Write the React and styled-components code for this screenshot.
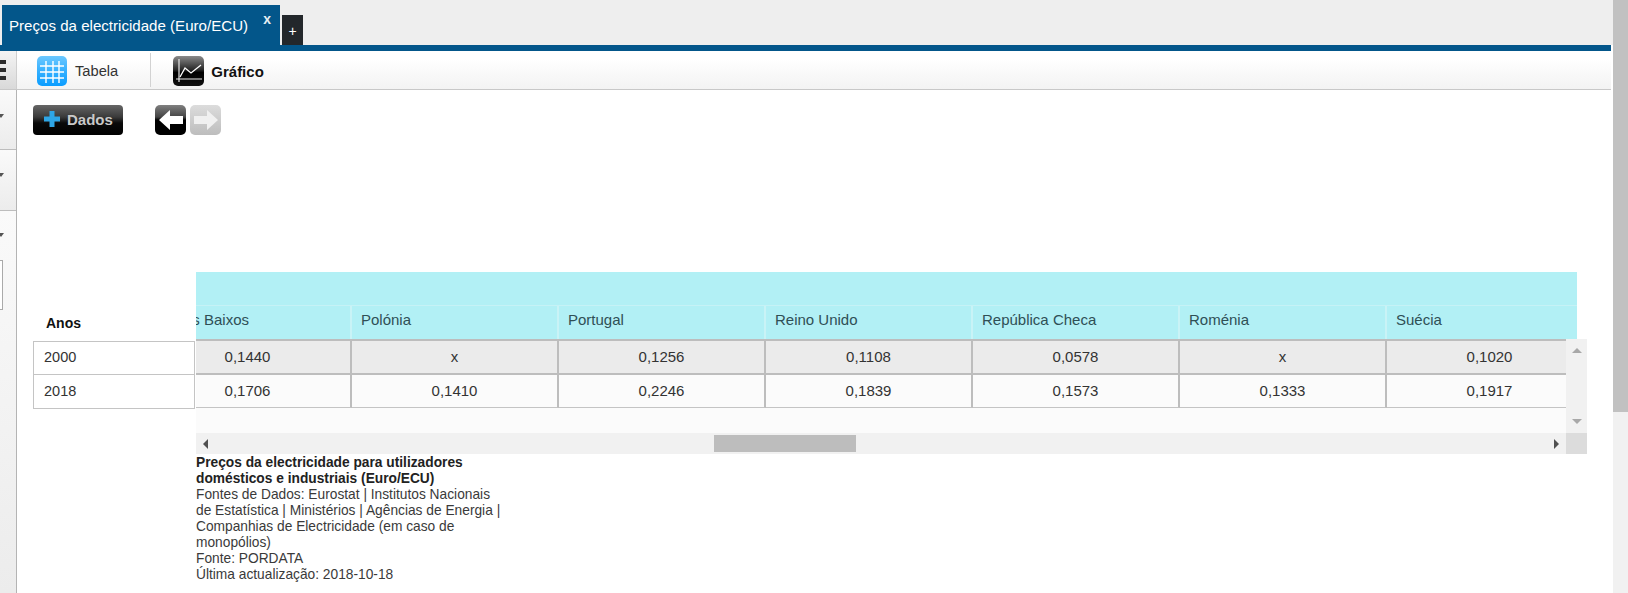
import styled, { createGlobalStyle } from "styled-components"

const Global = createGlobalStyle`
  html, body { margin: 0; padding: 0; height: 593px; overflow: hidden; background: #fff; }
  body { font-family: "Liberation Sans", Arial, sans-serif; font-size: 14px; color: #333; }
`

const Page = styled.div`
  display: flex;
  width: 1628px;
  height: 593px;
  overflow: hidden;
`
const Shell = styled.div`
  flex: 1;
  min-width: 0;
  display: flex;
  flex-direction: column;
`
const PageScroll = styled.div`
  width: 15px;
  background: #f1f1f1;
`
const PageThumb = styled.div`
  height: 412px;
  background: #c1c1c1;
`
const TabStrip = styled.div`
  height: 45px;
  box-sizing: border-box;
  padding: 5px 0 0 2px;
  background: #eeeeee;
  display: flex;
  align-items: flex-end;
  gap: 2px;
`
const Tab = styled.div`
  width: 278px;
  height: 40px;
  box-sizing: border-box;
  padding: 0 9px 0 7px;
  background: #03568a;
  color: #fff;
  font-size: 15.1px;
  line-height: 42px;
  display: flex;
  justify-content: space-between;
`
const TabClose = styled.span`
  font-weight: bold;
  font-size: 14px;
  line-height: 29px;
  height: 29px;
  color: #e6eef4;
`
const AddTab = styled.div`
  width: 21px;
  height: 30px;
  background: #23272b;
  color: #fff;
  font-size: 14px;
  line-height: 32px;
  text-align: center;
`
const BlueBar = styled.div`
  height: 6px;
  margin-right: 2px;
  background: #03568a;
`
const Toolbar = styled.div`
  height: 39px;
  box-sizing: border-box;
  margin-right: 2px;
  border-bottom: 1px solid #c8c8c8;
  background: linear-gradient(180deg, #ffffff 20%, #f3f3f3 100%);
  display: flex;
  align-items: center;
`
const MenuCell = styled.div`
  width: 17px;
  height: 100%;
  box-sizing: border-box;
  border-right: 1px solid #cfcfcf;
  background: linear-gradient(180deg, #f4f4f4, #d9d9d9);
  display: flex;
  flex-direction: column;
  justify-content: center;
  gap: 4px;
  overflow: hidden;
`
const MenuLine = styled.span`
  width: 6px;
  height: 4px;
  background: #2b2b2b;
`
const ToolItem = styled.div`
  height: 30px;
  margin-top: 2px;
  display: flex;
  align-items: center;
  gap: ${p => p.$gap};
  margin-left: ${p => p.$left};
  font-size: ${p => (p.$active ? "15px" : "14.7px")};
  font-weight: ${p => (p.$active ? "bold" : "normal")};
  color: ${p => (p.$active ? "#111" : "#333")};
`
const ToolDivider = styled.div`
  width: 1px;
  height: 34px;
  margin-left: 32px;
  background: #d2d2d2;
`
const Body = styled.div`
  flex: 1;
  min-height: 0;
  display: flex;
`
const Sidebar = styled.div`
  width: 17px;
  box-sizing: border-box;
  border-right: 1px solid #b4b4b4;
  background: #f0f0f0;
  display: flex;
  flex-direction: column;
`
const SideSection = styled.div`
  height: ${p => p.$height};
  box-sizing: border-box;
  padding-top: ${p => p.$pad};
  border-bottom: ${p => (p.$last ? "none" : "1px solid #bdbdbd")};
  background: linear-gradient(180deg, #fafafa, #ececec);
`
const Caret = styled.div`
  width: 0;
  height: 0;
  border-left: 3px solid transparent;
  border-right: 3px solid transparent;
  border-top: 4px solid #555;
  margin-left: -2px;
`
const SideInput = styled.div`
  width: 2px;
  height: 48px;
  margin-top: 23px;
  background: #fff;
  border: 1px solid #aaa;
  border-left: none;
`
const Content = styled.div`
  flex: 1;
  min-width: 0;
  padding: 15px 0 0 16px;
`
const Actions = styled.div`
  height: 30px;
  display: flex;
  align-items: center;
`
const DataButton = styled.div`
  width: 90px;
  height: 30px;
  box-sizing: border-box;
  padding: 0 0 2px 11px;
  border-radius: 4px;
  background: linear-gradient(180deg, #666 0%, #3a3a3a 40%, #0a0a0a 60%, #000 100%);
  color: #c9c9c9;
  font-weight: bold;
  font-size: 15px;
  display: flex;
  align-items: center;
  gap: 7px;
  margin-right: 32px;
`
const ArrowButton = styled.div`
  width: 31px;
  height: 30px;
  margin-right: 4px;
  border-radius: 5px;
  background: ${p => (p.$off
    ? "linear-gradient(180deg, #dcdcdc 0%, #bdbdbd 100%)"
    : "linear-gradient(180deg, #808080 0%, #444 40%, #000 50%, #000 100%)")};
  display: flex;
  align-items: center;
  justify-content: center;
`
const TableWrap = styled.div`
  display: flex;
  margin-top: 137px;
`
const Frozen = styled.div`
  width: 163px;
  flex: none;
`
const FrozenHead = styled.div`
  height: 69px;
  box-sizing: border-box;
  padding: 0 0 10px 13px;
  display: flex;
  align-items: flex-end;
  font-weight: bold;
  color: #111;
`
const FrozenCell = styled.div`
  height: 34px;
  box-sizing: border-box;
  width: 162px;
  padding-left: 10px;
  border: 1px solid #c4c4c4;
  border-top-width: ${p => (p.$first ? "1px" : "0")};
  font-size: 14.5px;
  line-height: ${p => (p.$first ? "30px" : "32px")};
  background: #fff;
`
const Pane = styled.div`
  width: 1391px;
  flex: none;
`
const HeadBlock = styled.div`
  width: 1381px;
  background: #b2f0f5;
  overflow: hidden;
`
const HeadBand = styled.div`
  height: 33px;
  border-bottom: 1px solid #c6f2f6;
`
const Track = styled.div`
  display: flex;
  margin-left: -51px;
  width: max-content;
`
const HeadCell = styled.div`
  width: 207px;
  height: 33px;
  box-sizing: border-box;
  padding-left: 9px;
  border-right: 2px solid #c9f3f6;
  font-size: 15px;
  line-height: 28px;
  color: #2f4f55;
`
const GridRow = styled.div`
  display: flex;
  height: 94px;
`
const GridBody = styled.div`
  width: 1370px;
  background: #fbfbfb;
  overflow: hidden;
`
const DataCell = styled.div`
  width: 207px;
  height: ${p => p.$height};
  box-sizing: border-box;
  border-right: 2px solid #bdbdbd;
  border-top: 2px solid #bdbdbd;
  border-bottom: ${p => (p.$last ? "1px solid #c4c4c4" : "none")};
  background: ${p => (p.$shade ? "#ebebeb" : "#fbfbfb")};
  text-align: center;
  font-size: 15px;
  line-height: 31px;
`
const VScroll = styled.div`
  width: 21px;
  background: #f1f1f1;
  display: flex;
  flex-direction: column;
  justify-content: space-between;
  align-items: center;
  padding: 9px 0;
  box-sizing: border-box;
`
const HScrollRow = styled.div`
  display: flex;
  height: 21px;
`
const HScroll = styled.div`
  width: 1370px;
  background: #f1f1f1;
  display: flex;
  align-items: center;
  padding: 0 7px;
  box-sizing: border-box;
`
const HThumb = styled.div`
  width: 142px;
  height: 17px;
  margin-left: 506px;
  margin-right: auto;
  background: #bdbdbd;
`
const Corner = styled.div`
  width: 21px;
  background: #dcdcdc;
`
const Tri = styled.div`
  width: 0;
  height: 0;
  border-style: solid;
  border-color: transparent;
  ${p => p.$dir === "up" && "border-width: 0 5px 5px; border-bottom-color: #a8a8a8;"}
  ${p => p.$dir === "down" && "border-width: 5px 5px 0; border-top-color: #a8a8a8;"}
  ${p => p.$dir === "left" && "border-width: 5px 5px 5px 0; border-right-color: #505050;"}
  ${p => p.$dir === "right" && "border-width: 5px 0 5px 5px; border-left-color: #505050;"}
`
const Note = styled.div`
  width: 310px;
  margin: 1px 0 0 163px;
  font-size: 13.75px;
  line-height: 16px;
  color: #3a3a3a;
`
const NoteTitle = styled.div`
  font-weight: bold;
  color: #222;
`

function TableIcon() {
  return (
    <svg width="30" height="30" viewBox="0 0 30 30">
      <defs>
        <linearGradient id="tb" x1="0" y1="0" x2="0" y2="1">
          <stop offset="0" stopColor="#6cc8ff" />
          <stop offset="0.5" stopColor="#35b0ff" />
          <stop offset="1" stopColor="#0a9dff" />
        </linearGradient>
      </defs>
      <rect width="30" height="30" rx="5" fill="url(#tb)" />
      <path d="M3 10H27M3 16H27M3 22H27M9 5V27M16 5V27M22 5V27" stroke="#fff" strokeWidth="1.4" fill="none" />
    </svg>
  )
}

function ChartIcon() {
  return (
    <svg width="31" height="30" viewBox="0 0 31 30">
      <defs>
        <linearGradient id="ch" x1="0" y1="0" x2="0" y2="1">
          <stop offset="0" stopColor="#8a8a8a" />
          <stop offset="0.45" stopColor="#2a2a2a" />
          <stop offset="0.55" stopColor="#000" />
          <stop offset="1" stopColor="#111" />
        </linearGradient>
      </defs>
      <rect width="31" height="30" rx="5" fill="url(#ch)" />
      <path d="M6 3V26M3 23H29" stroke="#e8e8e8" strokeWidth="1.2" fill="none" />
      <path d="M7 21L12 12L18 17L28 9" stroke="#fff" strokeWidth="1.3" fill="none" />
    </svg>
  )
}

function PlusIcon() {
  return (
    <svg width="16" height="16" viewBox="0 0 16 16">
      <path d="M5.500 0H10.500V5.500H16V10.500H10.500V16H5.500V10.500H0V5.500H5.500Z" fill="#2ea6e6" />
    </svg>
  )
}

function ArrowIcon({ flip, color }) {
  return (
    <svg width="24" height="20" viewBox="0 0 24 20" style={flip ? { transform: "scaleX(-1)" } : undefined}>
      <path d="M0 10L11 0V6H24V14H11V20Z" fill={color} />
    </svg>
  )
}

const columns = ["Países Baixos", "Polónia", "Portugal", "Reino Unido", "República Checa", "Roménia", "Suécia"]
const rows = [
  { year: "2000", values: ["0,1440", "x", "0,1256", "0,1108", "0,0578", "x", "0,1020"] },
  { year: "2018", values: ["0,1706", "0,1410", "0,2246", "0,1839", "0,1573", "0,1333", "0,1917"] },
]

export default function App() {
  return (
    <Page>
      <Global />
      <Shell>
        <TabStrip>
          <Tab>
            <span>Preços da electricidade (Euro/ECU)</span>
            <TabClose>x</TabClose>
          </Tab>
          <AddTab>+</AddTab>
        </TabStrip>
        <BlueBar />
        <Toolbar>
          <MenuCell>
            <MenuLine />
            <MenuLine />
            <MenuLine />
          </MenuCell>
          <ToolItem $left="20px" $gap="8px">
            <TableIcon />
            Tabela
          </ToolItem>
          <ToolDivider />
          <ToolItem $left="22px" $gap="7px" $active>
            <ChartIcon />
            Gráfico
          </ToolItem>
        </Toolbar>
        <Body>
          <Sidebar>
            <SideSection $height="60px" $pad="24px"><Caret /></SideSection>
            <SideSection $height="61px" $pad="23px"><Caret /></SideSection>
            <SideSection $height="383px" $pad="22px" $last>
              <Caret />
              <SideInput />
            </SideSection>
          </Sidebar>
          <Content>
            <Actions>
              <DataButton>
                <PlusIcon />
                Dados
              </DataButton>
              <ArrowButton>
                <ArrowIcon color="#fff" />
              </ArrowButton>
              <ArrowButton $off>
                <ArrowIcon flip color="#f0f0f0" />
              </ArrowButton>
            </Actions>
            <TableWrap>
              <Frozen>
                <FrozenHead>Anos</FrozenHead>
                {rows.map((r, i) => (
                  <FrozenCell key={r.year} $first={i === 0}>{r.year}</FrozenCell>
                ))}
              </Frozen>
              <Pane>
                <HeadBlock>
                  <HeadBand />
                  <Track>
                    {columns.map(c => <HeadCell key={c}>{c}</HeadCell>)}
                  </Track>
                </HeadBlock>
                <GridRow>
                  <GridBody>
                    {rows.map((r, i) => (
                      <Track key={r.year}>
                        {r.values.map((v, j) => (
                          <DataCell key={j} $shade={i === 0} $last={i === 1} $height={i === 0 ? "34px" : "35px"}>{v}</DataCell>
                        ))}
                      </Track>
                    ))}
                  </GridBody>
                  <VScroll>
                    <Tri $dir="up" />
                    <Tri $dir="down" />
                  </VScroll>
                </GridRow>
                <HScrollRow>
                  <HScroll>
                    <Tri $dir="left" />
                    <HThumb />
                    <Tri $dir="right" />
                  </HScroll>
                  <Corner />
                </HScrollRow>
              </Pane>
            </TableWrap>
            <Note>
              <NoteTitle>Preços da electricidade para utilizadores domésticos e industriais (Euro/ECU)</NoteTitle>
              <div>Fontes de Dados: Eurostat | Institutos Nacionais de Estatística | Ministérios | Agências de Energia | Companhias de Electricidade (em caso de monopólios)</div>
              <div>Fonte: PORDATA</div>
              <div>Última actualização: 2018-10-18</div>
            </Note>
          </Content>
        </Body>
      </Shell>
      <PageScroll>
        <PageThumb />
      </PageScroll>
    </Page>
  )
}
